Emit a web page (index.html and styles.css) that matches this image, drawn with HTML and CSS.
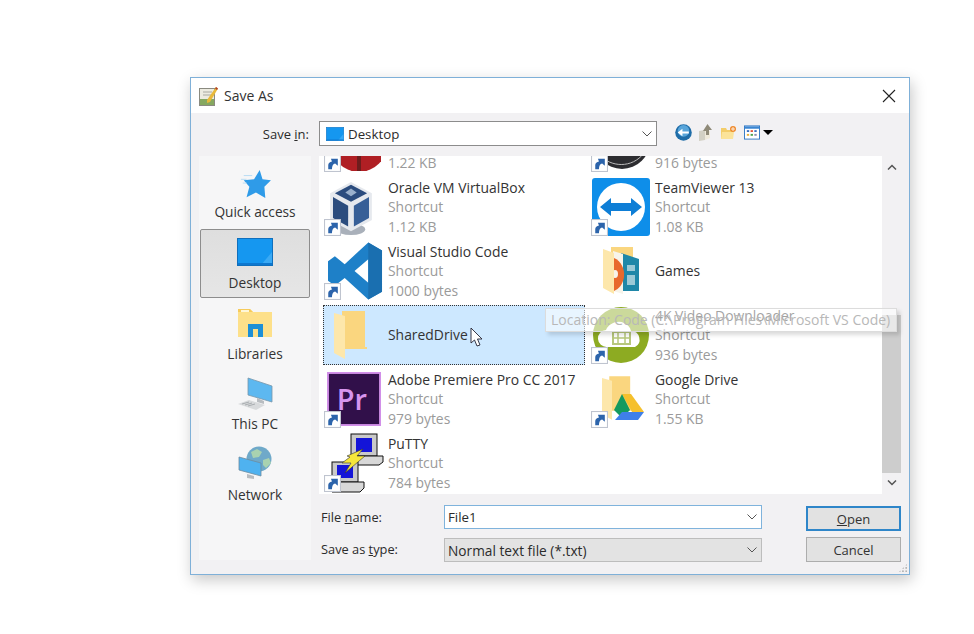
FILE: index.html
```html
<!DOCTYPE html>
<html lang="en">
<head>
<meta charset="utf-8">
<title>Save As</title>
<link rel="stylesheet" href="styles.css">
</head>
<body>
<svg class="defs" width="0" height="0">
  <defs>
    <symbol id="shortcut" viewBox="0 0 16 16">
      <rect x="0.500" y="0.500" width="15" height="15" fill="#fff" stroke="#bfc4cf"/>
      <path d="M4 13.500V9.500C4 7.500 5.500 6.500 7.500 6L6.500 3.500H13V10L10.500 8C8.500 8.500 7.500 10 7.500 13.500Z" fill="#2c64ab"/>
    </symbol>
    <symbol id="folder" viewBox="0 0 33 48">
      <path d="M8 0H31V36H33V38H8Z" fill="#fad67f"/>
      <path d="M0 2L11 5V48L0 42Z" fill="#fde7ab"/>
    </symbol>
    <symbol id="desk" viewBox="0 0 36 28">
      <rect x="0.500" y="0.500" width="35" height="27" fill="#1597f0" stroke="#0f6fbd"/>
      <path d="M24 27L35 14V27Z" fill="#3aaaf5"/>
      <rect x="1" y="25" width="34" height="2" fill="#0e78cf"/>
    </symbol>
  </defs>
</svg>
<main class="dialog">
  <header class="titlebar">
    <svg class="title-icon" viewBox="0 0 20 20" aria-hidden="true">
      <rect x="0.500" y="2.500" width="15" height="17" fill="#ecebe0" stroke="#8a8a80"/>
      <rect x="1" y="13" width="14" height="6" fill="#86a860"/>
      <path d="M4 6h9M4 9h9" stroke="#a8a8a0"/>
      <path d="M8 14L17 1l2 1.500L11 16l-3 1Z" fill="#e8b93a"/>
      <path d="M17 1l2 1.500-1 1.500-2-1.500Z" fill="#b0412c"/>
    </svg>
    <span class="title-text">Save As</span>
    <svg class="close" viewBox="0 0 14 14" aria-hidden="true"><path d="M1 1l12 12M13 1L1 13" stroke="#222" stroke-width="1.100" fill="none"/></svg>
  </header>
  <div class="content">
    <div class="toolbar">
      <span class="toolbar-label">Save <u>i</u>n:</span>
      <div class="combo combo-location">
        <svg class="loc-icon" width="18" height="14"><use href="#desk"/></svg>
        <span>Desktop</span>
        <svg class="chev" viewBox="0 0 10 6"><path d="M0.500 0.500L5 5l4.500-4.500" fill="none" stroke="#555"/></svg>
      </div>
      <div class="tools">
        <svg width="17" height="17" viewBox="0 0 16 16"><circle cx="8" cy="8" r="7.800" fill="#1f6da8"/><circle cx="8" cy="6.500" r="5.500" fill="#58a5da"/><path d="M2.500 8l4.500-3.500V7h6v2H7v2.500Z" fill="#fff"/></svg>
        <svg width="14" height="17" viewBox="0 0 14 17"><path d="M0 7l6-1v10l-6 1Z" fill="#d2d0c4"/><path d="M6 7h5v7l-5 2Z" fill="#efeadb"/><path d="M4 7L8.500 0l4.500 6h-3v5H7V7Z" fill="#8f8a78"/></svg>
        <svg width="17" height="14" viewBox="0 0 17 14"><path d="M1 2h5l1 2h6v9H1Z" fill="#f3cd6a"/><path d="M2 6h12l-1 7H1Z" fill="#fbe39a"/><circle cx="13" cy="3" r="3" fill="#ef8a2c"/><path d="M13 1v4M11 3h4" stroke="#fff" stroke-width=".8"/></svg>
        <span class="view-btn">
          <svg width="16" height="15" viewBox="0 0 17 15"><rect x=".5" y=".5" width="16" height="14" fill="#fff" stroke="#2f78c4"/><rect x="1" y="1" width="15" height="2.500" fill="#3b86d2"/><path d="M3 5h2.500v2H3Z" fill="#3a6fc0"/><path d="M7 5h2.500v2H7Z" fill="#e0533a"/><path d="M11 5h2.500v2H11Z" fill="#3a6fc0"/><path d="M3 9h2.500v2H3Z" fill="#e8b13a"/><path d="M7 9h2.500v2H7Z" fill="#4aa04a"/><path d="M11 9h2.500v2H11Z" fill="#8a8ab0"/></svg>
          <i class="caret"></i>
        </span>
      </div>
    </div>

    <div class="lower">
      <nav class="places">
        <div class="place">
          <svg width="34" height="30" viewBox="0 0 34 32"><path d="M22 1l3 10 9 1-7 7 1 12-10-6-10 5 3-11-6-7 11-1Z" fill="#2f9be8"/><path d="M5 7h9M2 11h6M4 15h4" stroke="#b5dbf4"/></svg>
          <span>Quick access</span>
        </div>
        <div class="place is-active">
          <svg width="36" height="28"><use href="#desk"/></svg>
          <span>Desktop</span>
        </div>
        <div class="place place-lib">
          <svg width="36" height="31" viewBox="0 0 36 31"><path d="M1 2h12l3 3h19v25H1Z" fill="#fde08a"/><path d="M1 2h12l3 3H1Z" fill="#f6cb5c"/><rect x="4" y="3" width="8" height="2" fill="#fff7d8"/><path d="M11 30V17h15v13h-5v-8h-5v8Z" fill="#1d8fd6"/></svg>
          <span>Libraries</span>
        </div>
        <div class="place">
          <svg width="36" height="34" viewBox="0 0 36 34"><path d="M11 1l24 8v16L11 18Z" fill="#5db8f0" stroke="#7a97aa" stroke-width=".8"/><path d="M20 21l7 3v3l-7-2Z" fill="#b8bcc0"/><path d="M1 27l11-4 16 5-9 5Z" fill="#d8dadc"/><path d="M5 27l7-2M8 28l7-2M11 29l7-2" stroke="#a9adb0"/></svg>
          <span>This PC</span>
        </div>
        <div class="place">
          <svg width="36" height="36" viewBox="0 0 36 36"><circle cx="22" cy="13" r="12.500" fill="#6fa9c9"/><path d="M14 6l6-3 5 3-3 5-6 1ZM26 14l6-2 2 5-5 5-3-3Z" fill="#a9d2b0"/><path d="M2 11l22 6v13L2 24Z" fill="#4fb2f0" stroke="#6d8ba0" stroke-width=".8"/><path d="M10 28l7 2v3l-7-1Z" fill="#b8bcc0"/></svg>
          <span>Network</span>
        </div>
      </nav>

      <div class="right">
        <div class="browser">
          <div class="list-wrap">
            <div class="list-clip">
              <div class="file-list">
                <div class="file file-cut">
                  <div class="file-icon"><svg width="56" height="56" viewBox="0 0 56 56"><circle cx="34" cy="29" r="28" fill="#b01f24"/><rect x="32" y="0" width="4" height="56" fill="#6d1d1d"/></svg><svg class="sc"><use href="#shortcut"/></svg></div>
                  <div class="file-info"><span class="file-meta">1.22 KB</span></div>
                </div>
                <div class="file file-cut">
                  <div class="file-icon"><svg width="56" height="56" viewBox="0 0 56 56"><circle cx="30" cy="26" r="28" fill="#2c2c30"/><path d="M8 40C18 52 40 54 52 38" stroke="#bbb" fill="none"/></svg><svg class="sc"><use href="#shortcut"/></svg></div>
                  <div class="file-info"><span class="file-meta">916 bytes</span></div>
                </div>

                <div class="file">
                  <div class="file-icon"><svg class="ic-vbox" width="48" height="55" viewBox="5 1 46 58"><ellipse cx="28" cy="52" rx="15" ry="6" fill="#a9b0ba"/><path d="M28 2L50 14V42L28 54L6 42V14Z" fill="#e6e9ee"/><path d="M28 5L45 14L28 23L11 14Z" fill="#2b4c7e"/><path d="M9 18L25 27V49L9 40Z" fill="#2b4c7e"/><path d="M47 18L31 27V49L47 40Z" fill="#375f97"/><path d="M22 13l6-4 6 4-6 4Z" fill="#9ab0cc"/></svg><svg class="sc"><use href="#shortcut"/></svg></div>
                  <div class="file-info"><span class="file-name">Oracle VM VirtualBox</span><span class="file-meta">Shortcut</span><span class="file-meta">1.12 KB</span></div>
                </div>
                <div class="file">
                  <div class="file-icon"><svg width="58" height="58" viewBox="0 0 58 58"><rect width="58" height="58" rx="3" fill="#0e8ee9"/><circle cx="29" cy="29" r="24" fill="#fff"/><path d="M8 29l11-9v5h20v-5l11 9-11 9v-5H19v5Z" fill="#0e7ed6"/></svg><svg class="sc"><use href="#shortcut"/></svg></div>
                  <div class="file-info"><span class="file-name">TeamViewer 13</span><span class="file-meta">Shortcut</span><span class="file-meta">1.08 KB</span></div>
                </div>

                <div class="file">
                  <div class="file-icon"><svg class="ic-code" width="55" height="58" viewBox="0 0 56 58"><path d="M41 0L55 8V50L41 58L17 36L7 44L0 39V19L7 14L17 22ZM41 17L27 29L41 41Z" fill="#1e80c8"/><path d="M41 0L55 8V50L41 58Z" fill="#1a6fb0"/></svg><svg class="sc"><use href="#shortcut"/></svg></div>
                  <div class="file-info"><span class="file-name">Visual Studio Code</span><span class="file-meta">Shortcut</span><span class="file-meta">1000 bytes</span></div>
                </div>
                <div class="file">
                  <div class="file-icon"><svg class="ic-games" width="36" height="47" viewBox="0 0 36 47"><path d="M8 0H30V10H8Z" fill="#fad67f"/><path d="M18 6L36 12V44H18Z" fill="#1f87a8"/><path d="M24 18h8v6h-8ZM24 28h8v10h-8Z" fill="#9cc9d6"/><path d="M10 4L20 7V47L10 44Z" fill="#f7f4ea"/><path d="M11 11C18 14 22 22 21 30C20 37 16 42 11 44Z" fill="#e8692c"/><ellipse cx="12" cy="27" rx="3" ry="4" fill="#f7f4ea"/><path d="M0 2L11 6V47L0 41Z" fill="#fde7ab"/></svg></div>
                  <div class="file-info file-info-center"><span class="file-name">Games</span></div>
                </div>

                <div class="file is-selected">
                  <div class="file-icon"><svg class="ic-folder" width="33" height="48"><use href="#folder"/></svg></div>
                  <div class="file-info file-info-center"><span class="file-name">SharedDrive</span></div>
                </div>
                <div class="file">
                  <div class="file-icon"><svg class="ic-4k" width="56" height="56" viewBox="0 0 56 56"><circle cx="28" cy="28" r="28" fill="#8dab22"/><path d="M14 40a8.500 8.500 0 0 1-1-17c3-7 12-10 18-7 4 2 6 4 7 8a8.500 8.500 0 0 1 4 16Z" fill="#fff"/><rect x="20" y="25" width="17" height="12" fill="none" stroke="#b7c77c" stroke-width="2"/><path d="M25 25v12M32 25v12M20 31h17" stroke="#b7c77c" stroke-width="1.500"/></svg><svg class="sc"><use href="#shortcut"/></svg></div>
                  <div class="file-info"><span class="file-name">4K Video Downloader</span><span class="file-meta">Shortcut</span><span class="file-meta">936 bytes</span></div>
                </div>

                <div class="file">
                  <div class="file-icon"><svg class="ic-pr" width="54" height="54" viewBox="0 0 56 56"><rect width="56" height="56" fill="#31104a"/><rect x="1" y="1" width="54" height="54" fill="none" stroke="#d18fe8" stroke-width="2"/><text class="pr-text" x="10" y="39">Pr</text></svg><svg class="sc"><use href="#shortcut"/></svg></div>
                  <div class="file-info"><span class="file-name">Adobe Premiere Pro CC 2017</span><span class="file-meta">Shortcut</span><span class="file-meta">979 bytes</span></div>
                </div>
                <div class="file">
                  <div class="file-icon"><svg width="56" height="50" viewBox="0 0 56 50"><use href="#folder" x="10" width="30" height="48"/><path d="M30 20L39 20L52 38H40Z" fill="#f5c02c"/><path d="M30 20L38 36L30 44L22 36Z" fill="#149a5f"/><path d="M30 38H52L46 46H23Z" fill="#3f7fe8"/></svg><svg class="sc"><use href="#shortcut"/></svg></div>
                  <div class="file-info"><span class="file-name">Google Drive</span><span class="file-meta">Shortcut</span><span class="file-meta">1.55 KB</span></div>
                </div>

                <div class="file">
                  <div class="file-icon"><svg width="60" height="60" viewBox="0 0 60 60"><rect x="26" y="1" width="26" height="22" fill="#c9c9c9" stroke="#111"/><rect x="31" y="5" width="16" height="14" fill="#1414d8"/><path d="M26 23h32v6l-4 3H26Z" fill="#d8d8d8" stroke="#111"/><rect x="7" y="29" width="26" height="20" fill="#c9c9c9" stroke="#111"/><rect x="12" y="32" width="16" height="13" fill="#1414d8"/><path d="M7 49h32v6l-4 4H7Z" fill="#d8d8d8" stroke="#111"/><path d="M38 16L32 23h8L20 40l6-10h-9l8-6-3-1Z" fill="#f6e63a" stroke="#333" stroke-width=".6"/></svg><svg class="sc"><use href="#shortcut"/></svg></div>
                  <div class="file-info"><span class="file-name">PuTTY</span><span class="file-meta">Shortcut</span><span class="file-meta">784 bytes</span></div>
                </div>
              </div>
            </div>
            <div class="tooltip">Location: Code (C:\Program Files\Microsoft VS Code)</div>
            <svg class="pointer" width="14" height="20" viewBox="0 0 14 20"><path d="M1 1V16L4.500 13L7 19L10 18L7.500 12H12Z" fill="#fff" stroke="#223" stroke-width=".9"/></svg>
          </div>

          <div class="scrollbar">
            <svg class="sb-arrow" viewBox="0 0 10 6"><path d="M1 5.500L5 1.500l4 4" fill="none" stroke="#555" stroke-width="1.500"/></svg>
            <div class="sb-track"><div class="sb-thumb"></div></div>
            <svg class="sb-arrow" viewBox="0 0 10 6"><path d="M1 .5L5 4.500l4-4" fill="none" stroke="#555" stroke-width="1.500"/></svg>
          </div>
        </div>

        <div class="form">
          <div class="fields">
            <div class="field">
              <label class="field-label">File <u>n</u>ame:</label>
              <div class="combo combo-input"><span>File1</span><svg class="chev" viewBox="0 0 10 6"><path d="M0.500 0.500L5 5l4.500-4.500" fill="none" stroke="#555"/></svg></div>
            </div>
            <div class="field">
              <label class="field-label field-label-type">Save as <u>t</u>ype:</label>
              <div class="combo combo-select"><span>Normal text file (*.txt)</span><svg class="chev" viewBox="0 0 10 6"><path d="M0.500 0.500L5 5l4.500-4.500" fill="none" stroke="#555"/></svg></div>
            </div>
          </div>
          <div class="buttons">
            <button class="btn btn-primary" type="button"><u>O</u>pen</button>
            <button class="btn" type="button">Cancel</button>
          </div>
        </div>
      </div>
    </div>
    <div class="grip"></div>
  </div>
</main>
</body>
</html>
```
FILE: styles.css
```css
* { box-sizing: border-box; }
html, body { margin: 0; height: 100%; background: #fff; overflow: hidden; }
body {
  font-family: "Open Sans", "Noto Sans", sans-serif;
  font-size: 13.5px;
  color: #2b2b2b;
}
.defs { position: absolute; }
.dialog {
  width: 720px;
  height: 498px;
  margin: 77px 0 0 190px;
  border: 1px solid #7fb0d8;
  background: #fff;
  box-shadow: 2px 5px 14px rgba(0, 0, 0, .22);
  display: flex;
  flex-direction: column;
}
.titlebar {
  height: 35px;
  flex: none;
  display: flex;
  align-items: center;
  padding: 0 13px 0 8px;
}
.title-icon { width: 20px; height: 20px; margin-right: 5px; }
.title-text { font-size: 14px; color: #333; }
.close { width: 14px; height: 14px; margin-left: auto; }
.content {
  flex: 1;
  background: #f2f1f3;
  position: relative;
  display: flex;
  flex-direction: column;
  min-height: 0;
}
.toolbar {
  height: 43px;
  flex: none;
  display: flex;
  align-items: center;
  padding-bottom: 2px;
}
.toolbar-label { width: 118px; text-align: right; font-size: 13px; }
.combo {
  display: flex;
  align-items: center;
  background: #fff;
  border: 1px solid #8c8c8c;
  padding-left: 3px;
  font-size: 13.3px;
}
.combo-location { width: 338px; height: 25px; margin-left: 10px; padding-left: 6px; }
.loc-icon { margin-right: 4px; }
.chev { width: 10px; height: 6px; margin-left: auto; margin-right: 4px; }
.tools {
  display: flex;
  align-items: center;
  gap: 7px;
  margin-left: 18px;
  margin-top: -2px;
}
.view-btn { display: flex; align-items: center; gap: 3px; }
.caret {
  width: 0;
  height: 0;
  border: 5px solid transparent;
  border-top: 5px solid #000;
  border-bottom: 0;
}
.lower { display: flex; flex: 1; min-height: 0; }
.places {
  width: 112px;
  height: 404px;
  margin-left: 8px;
  background: #f6f6f7;
  display: flex;
  flex-direction: column;
  align-items: center;
  font-size: 13.7px;
  color: #333;
  padding-top: 2px;
  flex: none;
}
.place {
  width: 110px;
  height: 71px;
  flex: none;
  display: flex;
  flex-direction: column;
  align-items: center;
  justify-content: flex-end;
  gap: 3px;
  padding-bottom: 8px;
}
.place-lib { gap: 6px; padding-bottom: 7px; }
.place.is-active {
  height: 69px;
  margin-bottom: 1px;
  gap: 7px;
  padding-bottom: 5px;
  background: linear-gradient(#dedede, #e6e6e6);
  border: 1px solid #8d8d8d;
  border-radius: 2px;
}
.right { margin-left: 8px; flex: none; width: 582px; }
.browser { display: flex; height: 338px; }
.list-wrap {
  width: 563px;
  position: relative;
  flex: none;
}
.list-clip {
  height: 100%;
  background: #fff;
  overflow: hidden;
}
.file-list {
  display: grid;
  grid-template-columns: 267px 267px;
  grid-auto-rows: 60px;
  row-gap: 4px;
  margin-top: -43px;
  padding-left: 4px;
}
.file { display: flex; align-items: center; width: 262px; }
.file-cut { align-items: flex-end; }
.file-cut .file-info { padding-bottom: 1px; }
.file-icon {
  width: 65px;
  height: 60px;
  flex: none;
  position: relative;
  display: flex;
  align-items: center;
  padding-left: 2px;
}
.ic-vbox { margin: 3px 0 0 2px; }
.ic-code { margin-left: 3px; }
.ic-games { margin-left: 11px; margin-top: -2px; }
.ic-folder { margin-left: 9px; margin-top: -1px; }
.ic-4k { margin: -1px 0 0 1px; }
.ic-pr { margin-left: 2px; }
.sc { position: absolute; left: 1px; bottom: 1px; width: 17px; height: 17px; }
.file-info { display: flex; flex-direction: column; line-height: 19.5px; }
.file-name { color: #333; font-size: 13.9px; white-space: nowrap; }
.file-meta { color: #9a9a9a; font-size: 13.9px; }
.is-selected {
  background: #cde8ff;
  border: 1px dotted #333;
}
.is-selected .file-icon { margin-left: -1px; }
.tooltip {
  position: absolute;
  z-index: 2;
  left: 226px;
  top: 152px;
  width: 352px;
  height: 24px;
  padding-left: 5px;
  line-height: 22px;
  font-size: 14px;
  color: #b8b8b8;
  background: rgba(255, 255, 255, .55);
  border: 1px solid #dcdcdc;
  box-shadow: 3px 3px 4px rgba(0, 0, 0, .14);
  white-space: nowrap;
}
.pointer { position: absolute; z-index: 3; left: 151px; top: 171px; }
.scrollbar {
  width: 19px;
  flex: none;
  display: flex;
  flex-direction: column;
  align-items: center;
}
.sb-arrow { width: 10px; height: 6px; flex: none; margin: 8px 0; }
.sb-track { flex: 1; width: 100%; position: relative; }
.sb-thumb { position: absolute; left: 0; right: 0; top: 137px; bottom: -1px; background: #cdcdcd; }
.form { display: flex; padding: 12px 0 0 2px; }
.fields { width: 441px; display: flex; flex-direction: column; gap: 9px; margin-top: -1px; }
.field { display: flex; align-items: center; }
.field-label { width: 123px; font-size: 12.8px; flex: none; }
.field-label-type { margin-top: -2px; }
.combo-input { width: 318px; height: 24px; border-color: #7fb3dc; }
.combo-select { width: 318px; height: 24px; background: #e3e3e3; border-color: #bdbdbd; font-size: 13.7px; }
.buttons { margin-left: 44px; display: flex; flex-direction: column; gap: 6px; }
.btn {
  width: 95px;
  height: 25px;
  font: inherit;
  font-size: 13px;
  color: #333;
  background: #e2e2e2;
  border: 1px solid #adadad;
  padding: 0;
}
.btn-primary { border: 2px solid #2f86c9; }
.grip {
  position: absolute;
  right: 1px;
  bottom: 1px;
  width: 10px;
  height: 10px;
  background-image: radial-gradient(#b4b4b4 1px, transparent 1.2px);
  background-size: 3.3px 3.3px;
  clip-path: polygon(100% 0, 100% 100%, 0 100%);
}
.pr-text { font-family: "Open Sans", sans-serif; font-size: 30px; font-weight: 600; fill: #d795ee; }
```
